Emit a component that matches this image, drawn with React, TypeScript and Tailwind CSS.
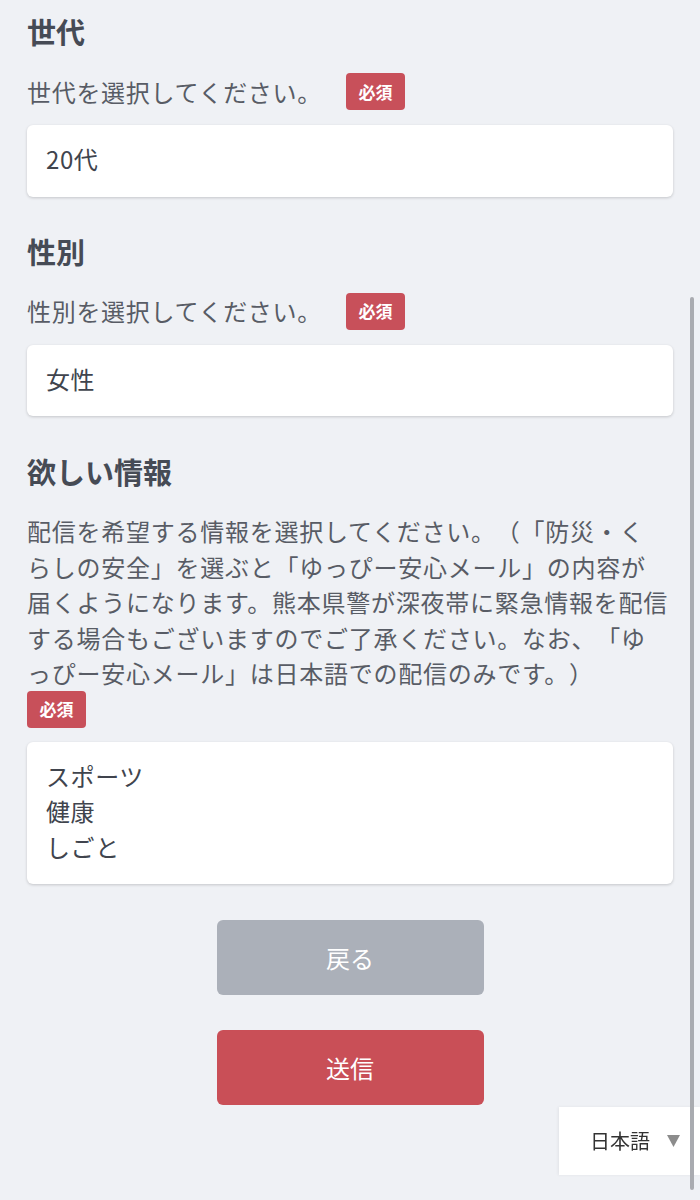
import React from 'react';

const Badge = () => (
  <span className="inline-flex h-[37px] w-[59px] shrink-0 items-center justify-center rounded-[4px] bg-[#c8505a] text-[17px] font-bold text-white">
    必須
  </span>
);

const Field = ({ lines }: { lines: string[] }) => (
  <div className="rounded-[6px] bg-white px-[19px] py-[18px] text-[24px] leading-[35.5px] tracking-[0.6px] text-[#40444d] shadow-[0_1px_3px_rgba(0,0,0,0.18)]">
    {lines.map((l) => (
      <div key={l} className="-translate-y-[2px]">{l}</div>
    ))}
  </div>
);

const SelectSection = ({ title, label, value }: { title: string; label: string; value: string }) => (
  <section className="flex flex-col">
    <h2 className="-translate-y-[2px] text-[29px] font-bold leading-[36px] text-[#464b55]">{title}</h2>
    <div className="mt-[22px] flex items-center gap-[24px]">
      <p className="text-[24px] leading-[35.5px] tracking-[0.7px] text-[#585c65]">{label}</p>
      <Badge />
    </div>
    <div className="mt-[15px]">
      <Field lines={[value]} />
    </div>
  </section>
);

export default function App() {
  return (
    <div className="min-h-[1200px] bg-[#eff1f5] font-['Noto_Sans_CJK_JP','Noto_Sans',sans-serif] [text-spacing-trim:space-all]">
      <div className="flex flex-col px-[27px] pt-[15px] pb-[60px]">
        <SelectSection title="世代" label="世代を選択してください。" value="20代" />
        <div className="mt-[38px]">
          <SelectSection title="性別" label="性別を選択してください。" value="女性" />
        </div>

        <section className="mt-[39px] flex flex-col">
          <h2 className="-translate-y-[2px] text-[29px] font-bold leading-[36px] text-[#464b55]">欲しい情報</h2>
          <p className="mt-[22px] whitespace-nowrap text-[24px] leading-[35.5px] tracking-[0.75px] text-[#585c65]">
            配信を希望する情報を選択してください。（「防災・く
            <br />
            らしの安全」を選ぶと「ゆっぴー安心メール」の内容が
            <br />
            届くようになります。熊本県警が深夜帯に緊急情報を配信
            <br />
            する場合もございますのでご了承ください。なお、「ゆ
            <br />
            っぴー安心メール」は日本語での配信のみです。）
          </p>
          <div>
            <Badge />
          </div>
          <div className="mt-[14px]">
            <Field lines={['スポーツ', '健康', 'しごと']} />
          </div>
        </section>

        <div className="mt-[36px] flex flex-col items-center gap-[35px]">
          <button className="h-[75px] w-[267px] rounded-[6px] bg-[#abb0b9] text-[24px] text-white">戻る</button>
          <button className="h-[75px] w-[267px] rounded-[6px] bg-[#c94f57] text-[24px] text-white">送信</button>
        </div>
      </div>

      <div className="fixed right-0 bottom-[25px] flex h-[68px] w-[141px] items-center bg-white pl-[31px] shadow-[-1px_0_3px_rgba(0,0,0,0.06)]">
        <span className="text-[20px] text-[#333]">日本語</span>
        <svg className="ml-[17px]" width="13" height="12" viewBox="0 0 13 12">
          <polygon points="0,0 13,0 6.5,12" fill="#8c8c8c" />
        </svg>
      </div>

      <div className="fixed top-[297px] right-[6px] h-[893px] w-[4px] rounded-full bg-[#a9abb0]" />
    </div>
  );
}
